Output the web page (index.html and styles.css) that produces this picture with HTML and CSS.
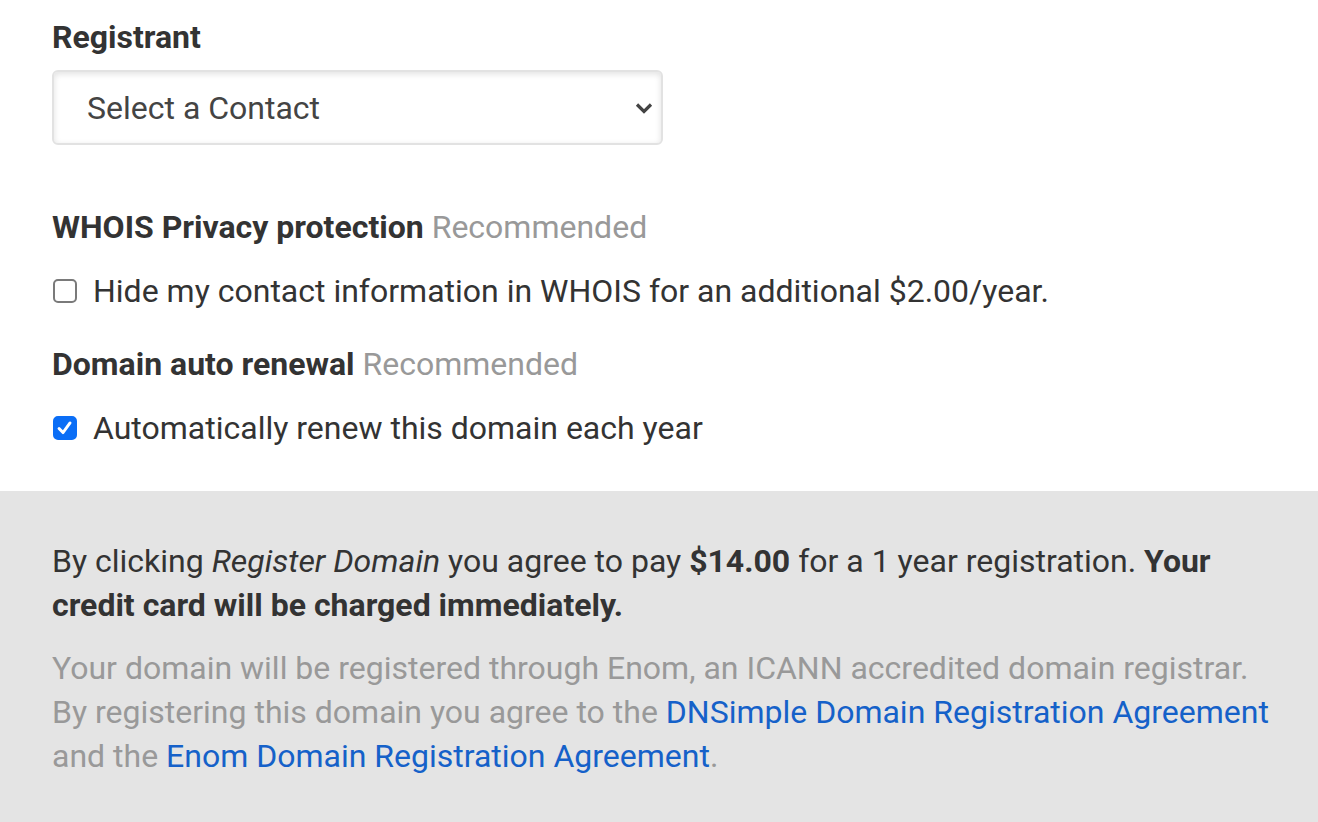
FILE: index.html
```html
<!DOCTYPE html>
<html>
<head>
<meta charset="utf-8">
<link rel="stylesheet" href="styles.css">
</head>
<body>
<div class="form">
  <div class="label">Registrant</div>
  <div class="select-wrap">
    <select class="select">
      <option>Select a Contact</option>
    </select>
  </div>

  <div class="label section">WHOIS Privacy protection <span class="muted">Recommended</span></div>
  <label class="check-row">
    <input type="checkbox" class="check">
    <span>Hide my contact information in WHOIS for an additional $2.00/year.</span>
  </label>

  <div class="label section2">Domain auto renewal <span class="muted">Recommended</span></div>
  <label class="check-row">
    <input type="checkbox" class="check" checked>
    <span>Automatically renew this domain each year</span>
  </label>
</div>
<div class="footer">
  <p class="agree">By clicking <em>Register Domain</em> you agree to pay <strong>$14.00</strong> for a 1 year registration. <strong>Your credit card will be charged immediately.</strong></p>
  <p class="note">Your domain will be registered through Enom, an ICANN accredited domain registrar. By registering this domain you agree to the <a href="#">DNSimple Domain Registration Agreement</a> and the <a href="#">Enom Domain Registration Agreement</a>.</p>
</div>
</body>
</html>
```

FILE: styles.css
```css
* { box-sizing: border-box; }
html, body {
  margin: 0;
  padding: 0;
  background: #ffffff;
}
body {
  font-family: Roboto, "Liberation Sans", sans-serif;
  font-size: 32px;
  line-height: 44px;
  color: #333333;
}
.form {
  padding: 15px 52px 41px;
}
.label {
  font-weight: 700;
  color: #333333;
}
.muted {
  font-weight: 400;
  color: #999999;
}
.select-wrap {
  margin-top: 11px;
  width: 611px;
}
.select {
  -webkit-appearance: none;
  appearance: none;
  display: block;
  width: 611px;
  height: 75px;
  padding: 0 50px 0 33px;
  border: 2px solid #e2e2e2;
  border-radius: 6px;
  background-color: #ffffff;
  background-image: url("data:image/svg+xml;utf8,<svg xmlns='http://www.w3.org/2000/svg' width='18' height='12' viewBox='0 0 18 12'><path d='M2 2.5 L9 9.5 L16 2.5' fill='none' stroke='%23444' stroke-width='3.2'/></svg>");
  background-repeat: no-repeat;
  background-position: right 8px center;
  box-shadow: inset 0 2px 6px rgba(0,0,0,0.12);
  font-family: Roboto, "Liberation Sans", sans-serif;
  font-size: 32px;
  color: #444444;
}
.section {
  margin-top: 60px;
}
.section2 {
  margin-top: 29px;
}
.check-row {
  display: flex;
  align-items: center;
  gap: 16px;
  margin-top: 20px;
  padding-left: 1px;
}
.check {
  -webkit-appearance: none;
  appearance: none;
  margin: 0;
  width: 24px;
  height: 24px;
  flex: none;
  border: 2px solid #7a7a7a;
  border-radius: 5px;
  background: #ffffff;
}
.check:checked {
  border-color: #0b6ef6;
  background-color: #0b6ef6;
  background-image: url("data:image/svg+xml;utf8,<svg xmlns='http://www.w3.org/2000/svg' width='24' height='24' viewBox='0 0 24 24'><path d='M5.5 12.5 L9.8 17 L17.5 6.5' fill='none' stroke='white' stroke-width='3.2' stroke-linecap='round' stroke-linejoin='round'/></svg>");
  background-position: center;
  background-repeat: no-repeat;
  background-size: 22px 22px;
}
.footer {
  background: #e4e4e4;
  padding: 48px 36px 60px 52px;
}
.footer p {
  margin: 0;
}
.agree {
  color: #333333;
}
.note {
  margin-top: 19px !important;
  color: #999999;
}
.note a {
  color: #1561c9;
  text-decoration: none;
}
```
